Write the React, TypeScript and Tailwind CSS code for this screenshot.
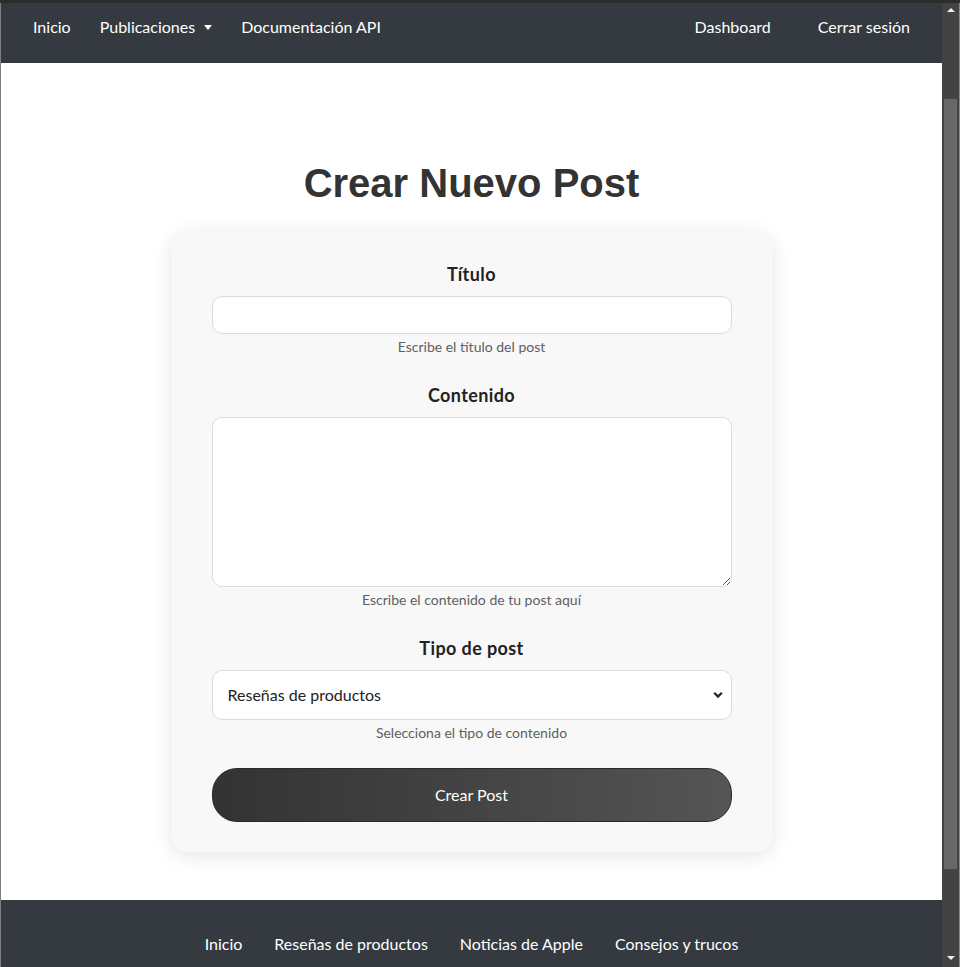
import React from "react";

const font = { fontFamily: '"Lato", "Liberation Sans", sans-serif' };

function Caret() {
  return (
    <span className="ml-[9px] inline-block h-0 w-0 border-x-[4.5px] border-t-[5px] border-x-transparent border-t-white align-middle" />
  );
}

function NavBar() {
  return (
    <nav className="flex h-[60px] items-start justify-between bg-[#343a40] px-[32px] pt-[12px] text-[16px] leading-[24px] text-white">
      <div className="flex items-center gap-[29px]">
        <a>Inicio</a>
        <a className="flex items-center">
          <span className="-mt-[1px]">Publicaciones</span>
          <Caret />
        </a>
        <a>Documentación API</a>
      </div>
      <div className="flex items-center gap-[47px]">
        <a>Dashboard</a>
        <a>Cerrar sesión</a>
      </div>
    </nav>
  );
}

function Label({ children }: { children: React.ReactNode }) {
  return (
    <label className="mb-[9px] block pt-[1px] text-center text-[18px] font-bold leading-[26px] tracking-[0.4px] text-[#222]">
      {children}
    </label>
  );
}

function Help({ children }: { children: React.ReactNode }) {
  return <p className="mt-[2px] text-center text-[14px] leading-[21px] text-[#5f5f5f]">{children}</p>;
}

function Form() {
  return (
    <div className="mx-auto w-[600px] rounded-[16px] bg-[#f8f8f8] px-[40px] pb-[30px] pt-[30px] shadow-[0_4px_20px_rgba(0,0,0,0.1)]">
      <div className="mb-6">
        <Label>Título</Label>
        <input
          type="text"
          className="block h-[38px] w-full rounded-[10px] border border-[#dcdcdc] bg-white px-[15px] text-[16px] text-[#222] outline-none"
        />
        <Help>Escribe el título del post</Help>
      </div>
      <div className="mb-6">
        <Label>Contenido</Label>
        <textarea className="block h-[170px] w-full rounded-[10px] border border-[#dcdcdc] bg-white px-[15px] py-[8px] text-[16px] text-[#222] outline-none" />
        <Help>Escribe el contenido de tu post aquí</Help>
      </div>
      <div className="mb-[25px]">
        <Label>Tipo de post</Label>
        <div className="relative">
          <select
            defaultValue="r"
            className="block h-[50px] w-full appearance-none rounded-[10px] border border-[#dcdcdc] bg-white px-[15px] text-[16px] text-[#222] outline-none"
            style={font}
          >
            <option value="r">Reseñas de productos</option>
            <option value="n">Noticias de Apple</option>
            <option value="c">Consejos y trucos</option>
          </select>
          <svg
            className="pointer-events-none absolute right-[9px] top-[21px]"
            width="10"
            height="8"
            viewBox="0 0 10 8"
          >
            <polyline points="1.2,1.8 5,5.6 8.8,1.8" fill="none" stroke="#222" strokeWidth="2.2" />
          </svg>
        </div>
        <Help>Selecciona el tipo de contenido</Help>
      </div>
      <button className="block h-[54px] w-full rounded-[25px] border border-[#2a2a2a] bg-gradient-to-r from-[#333333] to-[#555555] text-[16px] text-white">
        Crear Post
      </button>
    </div>
  );
}

function Footer() {
  return (
    <footer className="flex-1 bg-[#343a40] pt-[32px]">
      <div className="flex justify-center gap-[32px] text-[16px] leading-[24px] text-white">
        <a>Inicio</a>
        <a>Reseñas de productos</a>
        <a>Noticias de Apple</a>
        <a>Consejos y trucos</a>
      </div>
    </footer>
  );
}

function Scrollbar() {
  return (
    <div className="flex w-[17px] flex-col items-center bg-[#434343]">
      <div className="flex h-[17px] items-center justify-center">
        <span className="-mt-[3px] h-0 w-0 border-x-[4px] border-b-[4px] border-x-transparent border-b-[#f0f0f0]" />
      </div>
      <div className="mt-[79px] h-[770px] w-[13px] bg-[#686868]" />
      <div className="flex-1" />
      <div className="flex h-[17px] items-center justify-center">
        <span className="mb-[1px] h-0 w-0 border-x-[4px] border-t-[4px] border-x-transparent border-t-[#f0f0f0]" />
      </div>
    </div>
  );
}

export default function App() {
  return (
    <div className="flex h-[967px] w-[960px] flex-col overflow-hidden bg-[#2c2c2c]" style={font}>
      <div className="h-[3px] bg-[#2c2c2c]" />
      <div className="flex min-h-0 flex-1">
        <div className="w-[1px] bg-[#808080]" />
        <div className="flex min-w-0 flex-1 flex-col bg-white">
          <NavBar />
          <main className="pb-[48px] pt-[96px]">
            <h1
              className="mb-[23px] text-center text-[40px] font-bold leading-[48px] text-[#333]"
              style={{ fontFamily: '"Liberation Sans", Arial, sans-serif' }}
            >
              Crear Nuevo Post
            </h1>
            <Form />
          </main>
          <Footer />
        </div>
        <Scrollbar />
        <div className="w-[1px] bg-[#8a8a8a]" />
      </div>
    </div>
  );
}
